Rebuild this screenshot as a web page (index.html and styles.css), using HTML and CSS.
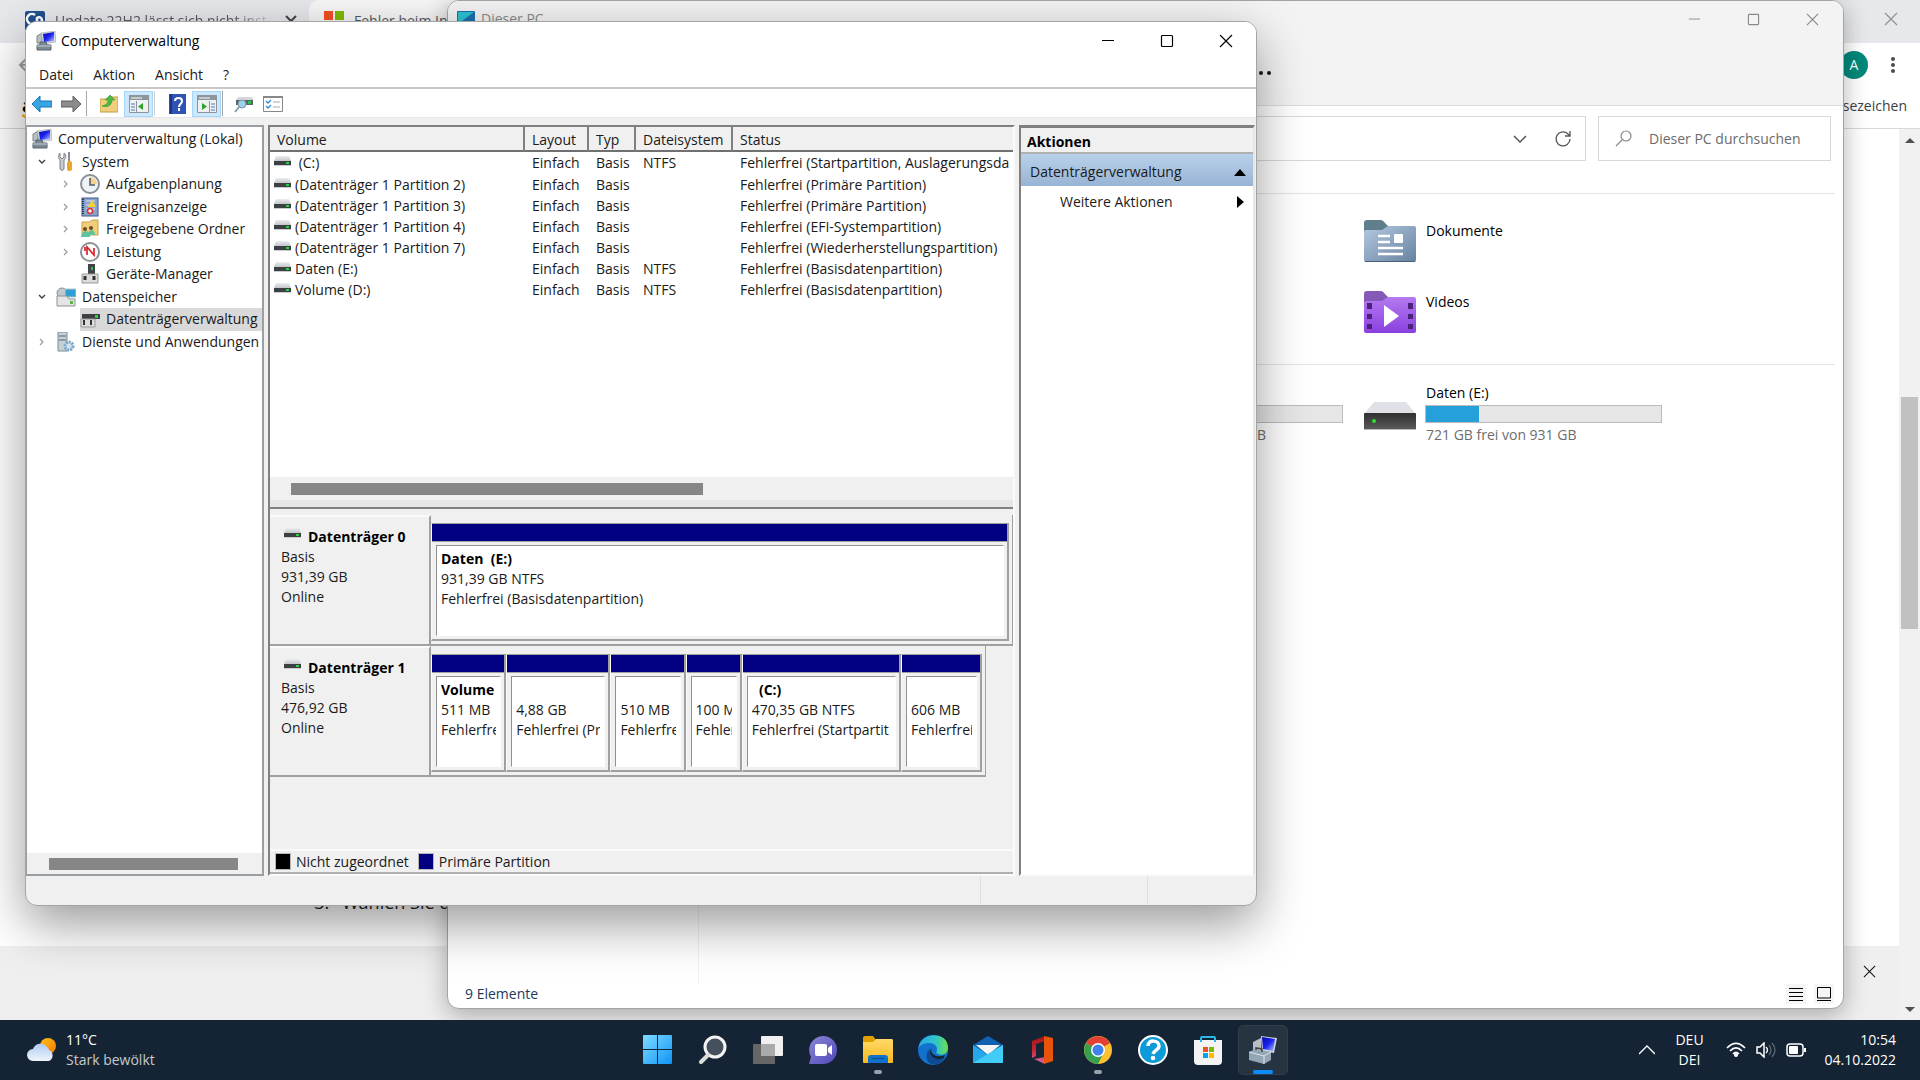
FILE: index.html
```html
<!DOCTYPE html>
<html lang="de">
<head>
  <meta charset="UTF-8">
  <title>Computerverwaltung</title>
  <link rel="stylesheet" href="styles.css">
</head>
<body>
  <!-- shared icons -->
  <svg class="defs" width="0" height="0">
    <defs>
      <linearGradient id="gDoc" x1="0" y1="0" x2="1" y2="1"><stop offset="0" stop-color="#b4c8e0"/><stop offset="1" stop-color="#66829f"/></linearGradient>
      <linearGradient id="gVid" x1="0" y1="0" x2="0" y2="1"><stop offset="0" stop-color="#b57af0"/><stop offset="1" stop-color="#8a40e0"/></linearGradient>
      <linearGradient id="gDark" x1="0" y1="0" x2="0" y2="1"><stop offset="0" stop-color="#303030"/><stop offset="1" stop-color="#5c5c5c"/></linearGradient>
      <linearGradient id="gWin" x1="0" y1="0" x2="1" y2="1"><stop offset="0" stop-color="#7fdcff"/><stop offset="1" stop-color="#0f94f5"/></linearGradient>
      <linearGradient id="gSun" x1="0" y1="0" x2="1" y2="1"><stop offset="0" stop-color="#ffc21a"/><stop offset="1" stop-color="#f07a00"/></linearGradient>
      <linearGradient id="gCloud" x1="0" y1="0" x2="0" y2="1"><stop offset="0" stop-color="#aecbf5"/><stop offset="1" stop-color="#f0f4fb"/></linearGradient>
      <linearGradient id="gChat" x1="0" y1="0" x2="1" y2="1"><stop offset="0" stop-color="#8b86d8"/><stop offset="1" stop-color="#5048b8"/></linearGradient>
      <linearGradient id="gFold" x1="0" y1="0" x2="0" y2="1"><stop offset="0" stop-color="#ffd968"/><stop offset="1" stop-color="#fcb91d"/></linearGradient>
      <linearGradient id="gEdge" x1="0" y1="0" x2="1" y2="0"><stop offset="0" stop-color="#2aa8e8"/><stop offset="0.6" stop-color="#2fc6c8"/><stop offset="1" stop-color="#6be04a"/></linearGradient>
      <linearGradient id="gOff" x1="0" y1="1" x2="0" y2="0"><stop offset="0" stop-color="#d86ab0"/><stop offset="0.5" stop-color="#c8242f"/><stop offset="1" stop-color="#a01818"/></linearGradient>
      <linearGradient id="gScreen" x1="0" y1="0" x2="1" y2="1"><stop offset="0" stop-color="#0808a8"/><stop offset="0.5" stop-color="#1a22f0"/><stop offset="1" stop-color="#b8c8ff"/></linearGradient>
      <linearGradient id="gTop" x1="0" y1="0" x2="0" y2="1"><stop offset="0" stop-color="#eceef0"/><stop offset="1" stop-color="#c2c5c9"/></linearGradient>

      <symbol id="disk" viewBox="0 0 17 11">
        <path d="M2 0h13l2 5H0z" fill="url(#gTop)"/>
        <rect y="5" width="17" height="4" fill="#3c4043"/>
        <rect y="9" width="17" height="1" fill="#c9ccd0"/>
        <rect x="12" y="6" width="3" height="2" fill="#29d243"/>
      </symbol>
      <symbol id="pc" viewBox="0 0 20 20">
        <path d="M1 5l5-3v10H1z" fill="#b9bec4" stroke="#7f868c"/>
        <path d="M5 2l14-2 1 11-13 2z" fill="#d7dbe0" stroke="#8f969c" stroke-width=".5"/>
        <path d="M7 3l11-2v9L8 11z" fill="url(#gScreen)"/>
        <path d="M4 11h6l1 3h4v5H1v-5h3z" fill="#7b8a94" stroke="#56636c"/>
        <path d="M1 15h14" stroke="#c9d2d8"/>
      </symbol>
      <symbol id="chevDown" viewBox="0 0 10 10"><path d="M2 3l3 3 3-3" fill="none" stroke="#404040" stroke-width="1.4"/></symbol>
      <symbol id="chevRight" viewBox="0 0 10 10"><path d="M3 2l3 3-3 3" fill="none" stroke="#9a9a9a" stroke-width="1.2"/></symbol>
      <symbol id="min" viewBox="0 0 14 14"><path d="M1 6.500h12" fill="none" stroke="currentColor"/></symbol>
      <symbol id="max" viewBox="0 0 14 14"><rect x="1.500" y="1.500" width="11" height="11" rx="1" fill="none" stroke="currentColor" stroke-width="1.200"/></symbol>
      <symbol id="close" viewBox="0 0 14 14"><path d="M1 1l12 12M13 1L1 13" fill="none" stroke="currentColor" stroke-width="1.200"/></symbol>
      <symbol id="harddrive" viewBox="0 0 52 28">
        <path d="M10 0h32l10 12H0z" fill="#dfe1e6"/>
        <rect y="11" width="52" height="17" rx="1" fill="url(#gDark)"/>
        <path d="M0 27.500h52" stroke="#b9b9b9"/>
        <circle cx="10" cy="19" r="2" fill="#2ee02e"/>
      </symbol>
    </defs>
  </svg>

  <main class="desktop">
    <!-- browser in the background -->
    <section class="browser">
      <div class="tabs">
        <div class="tab">
          <svg width="20" height="20" viewBox="0 0 20 20"><rect width="20" height="20" rx="2" fill="#20508f"/><path d="M10 4a5 5 0 1 0 0 8M12 14V7a3 3 0 0 1 5 2c0 2-2 3-4 3" fill="none" stroke="#fff" stroke-width="2.500"/></svg>
          <span class="tab-name fade">Update 22H2 lässt sich nicht inst</span>
          <button class="plain" aria-label="Tabs"><svg width="12" height="12" viewBox="0 0 12 12"><path d="M1 3l5 5 5-5" fill="none" stroke="#444" stroke-width="2"/></svg></button>
        </div>
        <div class="tab active">
          <svg width="20" height="20" viewBox="0 0 20 20"><path d="M0 0h9v9H0z" fill="#f25022"/><path d="M11 0h9v9h-9z" fill="#7fba00"/><path d="M0 11h9v9H0z" fill="#00a4ef"/><path d="M11 11h9v9h-9z" fill="#ffb900"/></svg>
          <span class="tab-name">Fehler beim In</span>
        </div>
        <button class="plain tabs-close" aria-label="Schließen"><svg width="14" height="14"><use href="#close"/></svg></button>
      </div>
      <div class="browser-bar">
        <svg width="16" height="16" viewBox="0 0 16 16"><path d="M9 1L2 8l7 7M2 8h13" fill="none" stroke="#a0a0a0" stroke-width="2"/></svg>
        <span class="avatar">A</span>
        <button class="plain" aria-label="Menü"><svg width="6" height="18" viewBox="0 0 6 18"><g fill="#4a4d51"><circle cx="3" cy="3" r="2"/><circle cx="3" cy="9" r="2"/><circle cx="3" cy="15" r="2"/></g></svg></button>
      </div>
      <div class="bookmarks">
        <span class="amazon">a<svg width="16" height="5" viewBox="0 0 16 5"><path d="M0 1q8 6 15 0" fill="none" stroke="#f90" stroke-width="2"/></svg></span>
        <a href="#">Lesezeichen</a>
      </div>
      <div class="page">
        <div class="page-main">
          <ol start="3"><li>Wählen Sie d</li></ol>
          <div class="page-foot">
            <button class="plain" aria-label="Schließen"><svg width="13" height="13"><use href="#close"/></svg></button>
          </div>
        </div>
        <div class="vscroll"><span class="arrow-up"></span><span class="vthumb"></span><span class="arrow-down"></span></div>
      </div>
    </section>

    <!-- explorer -->
    <section class="window explorer">
      <header class="ex-head">
        <div class="ex-title">
          <svg width="18" height="16" viewBox="0 0 18 16"><rect width="18" height="14" rx="1" fill="#1a6fb0"/><path d="M1 1h16L1 13z" fill="#2ec0d0"/></svg>
          <span>Dieser PC</span>
          <div class="win-buttons">
            <button aria-label="Minimieren"><svg width="13" height="13"><use href="#min"/></svg></button>
            <button aria-label="Maximieren"><svg width="13" height="13"><use href="#max"/></svg></button>
            <button aria-label="Schließen"><svg width="13" height="13"><use href="#close"/></svg></button>
          </div>
        </div>
        <button class="plain more" aria-label="Mehr"><svg width="22" height="6" viewBox="0 0 22 6"><g fill="#1a1a1a"><circle cx="3" cy="3" r="2"/><circle cx="11" cy="3" r="2"/><circle cx="19" cy="3" r="2"/></g></svg></button>
      </header>
      <div class="ex-address">
        <div class="address">
          <button class="plain" aria-label="Verlauf"><svg width="16" height="16" viewBox="0 0 16 16"><path d="M2 5l6 6 6-6" fill="none" stroke="#555" stroke-width="1.500"/></svg></button>
          <button class="plain" aria-label="Aktualisieren"><svg width="18" height="18" viewBox="0 0 18 18"><path d="M16 9a7 7 0 1 1-2-5l2 2M16 1v5h-5" fill="none" stroke="#555" stroke-width="1.300"/></svg></button>
        </div>
        <label class="search">
          <svg width="17" height="17" viewBox="0 0 17 17"><circle cx="11" cy="6" r="5" fill="none" stroke="#8a8a8a" stroke-width="1.200"/><path d="M7 10l-6 6" stroke="#8a8a8a" stroke-width="1.200"/></svg>
          <input type="text" placeholder="Dieser PC durchsuchen" aria-label="Dieser PC durchsuchen">
        </label>
      </div>
      <div class="ex-body">
        <div class="ex-nav"></div>
        <div class="ex-content">
          <div class="ex-group folders">
            <div class="ex-item third">
              <svg width="52" height="43" viewBox="0 0 52 43">
                <path d="M0 12V3q0-3 3-3h14q2 0 4 3l3 3v6z" fill="#5f7f8c"/>
                <path d="M2 10h16l6-4h26q2 0 2 2v32q0 2-2 2H2q-2 0-2-2V12q0-2 2-2z" fill="url(#gDoc)"/>
                <path d="M1 41.500h50" stroke="#48607c"/>
                <path d="M14 16h12M14 22h12M14 28h25M14 34h25" stroke="#fff" stroke-width="2.500"/><rect x="30" y="14" width="9" height="9" rx="1" fill="#fff"/>
              </svg>
              <span>Dokumente</span>
            </div>
            <div class="ex-item third">
              <svg width="52" height="43" viewBox="0 0 52 43">
                <path d="M0 12V3q0-3 3-3h14q2 0 4 3l3 3v6z" fill="#8459b8"/>
                <path d="M2 10h16l6-4h26q2 0 2 2v32q0 2-2 2H2q-2 0-2-2V12q0-2 2-2z" fill="url(#gVid)"/>
                <path d="M3 12h5v6H3zM3 23h5v5H3zM3 33h5v5H3zM44 12h5v6h-5zM44 23h5v5h-5zM44 33h5v5h-5z" fill="#4a2478"/>
                <path d="M20 14l15 11-15 11z" fill="#fff"/>
              </svg>
              <span>Videos</span>
            </div>
          </div>
          <div class="ex-group drives">
            <div class="drive second">
              <svg width="52" height="28"><use href="#harddrive"/></svg>
              <div class="drive-info"><span>&nbsp;</span><div class="usage"></div><small class="cut">B</small></div>
            </div>
            <div class="drive">
              <svg width="52" height="28"><use href="#harddrive"/></svg>
              <div class="drive-info"><span>Daten (E:)</span><div class="usage"><div class="used" style="width: 22.500%"></div></div><small>721 GB frei von 931 GB</small></div>
            </div>
          </div>
        </div>
      </div>
      <footer class="ex-status">
        <span>9 Elemente</span>
        <button aria-label="Details"><svg width="14" height="14" viewBox="0 0 14 14"><path d="M0 1.500h14M0 5.500h14M0 9.500h14M0 13.500h14" stroke="#000"/></svg></button>
        <button aria-label="Kacheln"><svg width="14" height="14" viewBox="0 0 14 14"><path d="M.5.500h13v10.500H.5zM0 13.500h14" fill="none" stroke="#000"/></svg></button>
      </footer>
    </section>

    <!-- computer management -->
    <section class="window mmc">
      <header class="mmc-title">
        <svg width="20" height="20"><use href="#pc"/></svg>
        <span>Computerverwaltung</span>
        <div class="win-buttons">
          <button aria-label="Minimieren"><svg width="14" height="14"><use href="#min"/></svg></button>
          <button aria-label="Maximieren"><svg width="14" height="14"><use href="#max"/></svg></button>
          <button aria-label="Schließen"><svg width="14" height="14"><use href="#close"/></svg></button>
        </div>
      </header>
      <nav class="menu">
        <button>Datei</button><button>Aktion</button><button>Ansicht</button><button>?</button>
      </nav>
      <div class="toolbar">
        <button aria-label="Zurück"><svg width="20" height="18" viewBox="0 0 20 18"><path d="M0 9l8-8v5h12v6H8v5z" fill="#38a5e4" stroke="#1b72b0"/></svg></button>
        <button aria-label="Vorwärts"><svg width="20" height="18" viewBox="0 0 20 18"><path d="M20 9l-8-8v5H0v6h12v5z" fill="#8b8b8b" stroke="#606060"/></svg></button>
        <i class="sep"></i>
        <button aria-label="Aufwärts" class="gap-left"><svg width="18" height="19" viewBox="0 0 18 19"><path d="M0 5h7l2-2h9v15H0z" fill="#efcf7c" stroke="#c49d45"/><path d="M2 12c5-1 6-4 6-6H5l5-5 5 5h-3c0 5-4 8-10 6z" fill="#4cb944" stroke="#2f8a2b" stroke-width=".5"/></svg></button>
        <button aria-label="Struktur" class="on"><svg width="20" height="18" viewBox="0 0 20 18"><path d="M.5.500h19v17H.5z" fill="#eef0f2" stroke="#8d959c"/><path d="M0 0h20v5H0z" fill="#8d959c"/><path d="M2 3h11" stroke="#fff"/><path d="M2 9h4M2 12h4M2 15h4" stroke="#4e78b8"/><path d="M7.500 6v12" stroke="#8d959c"/><path d="M14 8v7l-5-3.500z" fill="#2ea32b"/></svg></button>
        <i class="sep light"></i>
        <button aria-label="Hilfe" class="gap-left"><svg width="17" height="20" viewBox="0 0 17 20"><rect width="17" height="20" fill="#2f52b5"/><path d="M2 0v20" stroke="#1c3380" stroke-width="2"/><path d="M6 7c0-4 7-4 7 0 0 3-3 3-3 6" fill="none" stroke="#fff" stroke-width="2"/><rect x="9" y="14" width="2" height="3" fill="#fff"/></svg></button>
        <button aria-label="Aktionsbereich" class="on"><svg width="20" height="18" viewBox="0 0 20 18"><path d="M.5.500h19v17H.5z" fill="#eef0f2" stroke="#8d959c"/><path d="M0 0h20v5H0z" fill="#8d959c"/><path d="M2 3h11" stroke="#fff"/><path d="M14 9h4M14 12h4M14 15h4" stroke="#4e78b8"/><path d="M12.500 6v12" stroke="#8d959c"/><path d="M5 8v7l5-3.500z" fill="#2ea32b"/></svg></button>
        <i class="sep"></i>
        <button aria-label="Suchen" class="gap-small"><svg width="20" height="18" viewBox="0 0 20 18"><path d="M4 2h14l2 3H2z" fill="#d5d7da"/><path d="M2 5h17v5H2z" fill="#5a6468"/><rect x="14" y="6" width="3" height="3" fill="#29c243"/><circle cx="8" cy="9" r="4" fill="#9fd0ea" stroke="#7b97a8"/><path d="M5 12l-4 5" stroke="#8aa0ae" stroke-width="2"/></svg></button>
        <button aria-label="Eigenschaften"><svg width="20" height="16" viewBox="0 0 20 16"><path d="M.5.500h19v15H.5z" fill="#fff" stroke="#888"/><path d="M0 1h20" stroke="#888" stroke-width="2"/><path d="M3 5l2 2 3-3M3 10l2 2 3-3" fill="none" stroke="#2a8ad8" stroke-width="1.300"/><path d="M10 6h7M10 11h7" stroke="#aaa"/></svg></button>
      </div>

      <div class="panes">
        <div class="tree-pane">
          <ul class="tree">
            <li><svg width="20" height="20"><use href="#pc"/></svg><span>Computerverwaltung (Lokal)</span></li>
            <li class="l1"><svg class="chev" width="10" height="10"><use href="#chevDown"/></svg><svg width="20" height="20" viewBox="0 0 20 20"><path d="M4 1v4l2 2 2-2V1c3 2 2 5 0 7v9q-2 3-4 0V8C2 6 2 3 4 1z" fill="#c9ccd0" stroke="#7d8287"/><path d="M13 0v9" stroke="#8b8f93" stroke-width="2"/><rect x="11" y="9" width="5" height="10" rx="2" fill="#eda52a"/></svg><span>System</span></li>
            <li class="l2"><svg class="chev" width="10" height="10"><use href="#chevRight"/></svg><svg width="20" height="20" viewBox="0 0 20 20"><circle cx="10" cy="10" r="9" fill="#eef3f8" stroke="#8b9095" stroke-width="2"/><path d="M10 3a7 7 0 0 1 7 7h-7z" fill="#f3d394"/><path d="M10 4v7h5" fill="none" stroke="#4d5a66" stroke-width="1.500"/></svg><span>Aufgabenplanung</span></li>
            <li class="l2"><svg class="chev" width="10" height="10"><use href="#chevRight"/></svg><svg width="20" height="20" viewBox="0 0 20 20"><rect x="2" y="1" width="16" height="18" fill="#8aa3cc" stroke="#41598c"/><path d="M6 4h9M6 8h9M6 12h9" stroke="#dfe6f3"/><path d="M3 2v16" stroke="#26355c" stroke-width="2" stroke-dasharray="1 1"/><path d="M12 3l4 7H8z" fill="#fbd22d"/><circle cx="10" cy="14" r="2.500" fill="#fff" stroke="#d8322c" stroke-width="1.500"/></svg><span>Ereignisanzeige</span></li>
            <li class="l2"><svg class="chev" width="10" height="10"><use href="#chevRight"/></svg><svg width="20" height="20" viewBox="0 0 20 20"><path d="M2 3h8l2-2h6v15H2z" fill="#f0cf78" stroke="#c9a24a"/><circle cx="5" cy="10" r="2" fill="#6b4a2c"/><circle cx="11" cy="9" r="2" fill="#6b4a2c"/><path d="M1 18q1-6 5-6t4 6zM8 16q0-4 3-5 4 0 4 5z" fill="#5fc3a0"/></svg><span>Freigegebene Ordner</span></li>
            <li class="l2"><svg class="chev" width="10" height="10"><use href="#chevRight"/></svg><svg width="20" height="20" viewBox="0 0 20 20"><circle cx="10" cy="10" r="9" fill="#fff" stroke="#8b9095" stroke-width="2"/><path d="M5 5v4M7 13V5l7 8V6" fill="none" stroke="#d8222a" stroke-width="1.700"/></svg><span>Leistung</span></li>
            <li class="l2"><i class="chev"></i><svg width="20" height="20" viewBox="0 0 20 20"><rect x="8" y="0" width="7" height="10" fill="#3f4448"/><rect x="11" y="3" width="2" height="3" fill="#2cc24a"/><path d="M2 10h16v9H2z" fill="#dcdcdc" stroke="#999"/><path d="M5 12v4M14 12v4" stroke="#333" stroke-width="3"/></svg><span>Geräte-Manager</span></li>
            <li class="l1"><svg class="chev" width="10" height="10"><use href="#chevDown"/></svg><svg width="20" height="20" viewBox="0 0 20 20"><circle cx="6" cy="6" r="5" fill="#c4c9cd" stroke="#8c9195"/><rect x="9" y="2" width="11" height="8" fill="#2d9fd2" stroke="#b5c5cf"/><path d="M1 9h10l2 3h6v7H1z" fill="#e2e4e6" stroke="#8c9195"/><rect x="14" y="14" width="3" height="3" fill="#58b54a"/></svg><span>Datenspeicher</span></li>
            <li class="l2"><i class="chev"></i><a href="#" class="selected"><svg width="20" height="20" viewBox="0 0 20 20"><path d="M4 2h14l2 3H2z" fill="#d5d7da"/><rect x="2" y="5" width="18" height="5" fill="#3c4043"/><rect x="15" y="6" width="3" height="3" fill="#29d243"/><path d="M1 10h14v8H1z" fill="#dcdcdc" stroke="#999"/><path d="M4 11v5M11 11v5" stroke="#333" stroke-width="2"/></svg><span>Datenträgerverwaltung</span></a></li>
            <li class="l1"><svg class="chev" width="10" height="10"><use href="#chevRight"/></svg><svg width="20" height="20" viewBox="0 0 20 20"><path d="M2 0h9v19H2z" fill="#c6d0d6" stroke="#7d8b93"/><path d="M3 4h7M3 8h7" stroke="#56646c"/><circle cx="13" cy="14" r="4" fill="#cfe3f2" stroke="#7aa7c9" stroke-width="3" stroke-dasharray="2 1"/></svg><span>Dienste und Anwendungen</span></li>
          </ul>
          <div class="hscroll"><span class="hthumb"></span></div>
        </div>

        <div class="main-pane">
          <div class="volumes">
            <table>
              <thead><tr><th class="c1">Volume</th><th class="c2">Layout</th><th class="c3">Typ</th><th class="c4">Dateisystem</th><th>Status</th></tr></thead>
              <tbody>
                <tr><td><svg width="17" height="11"><use href="#disk"/></svg>&nbsp;(C:)</td><td>Einfach</td><td>Basis</td><td>NTFS</td><td>Fehlerfrei (Startpartition, Auslagerungsda</td></tr>
                <tr><td><svg width="17" height="11"><use href="#disk"/></svg>(Datenträger 1 Partition 2)</td><td>Einfach</td><td>Basis</td><td></td><td>Fehlerfrei (Primäre Partition)</td></tr>
                <tr><td><svg width="17" height="11"><use href="#disk"/></svg>(Datenträger 1 Partition 3)</td><td>Einfach</td><td>Basis</td><td></td><td>Fehlerfrei (Primäre Partition)</td></tr>
                <tr><td><svg width="17" height="11"><use href="#disk"/></svg>(Datenträger 1 Partition 4)</td><td>Einfach</td><td>Basis</td><td></td><td>Fehlerfrei (EFI-Systempartition)</td></tr>
                <tr><td><svg width="17" height="11"><use href="#disk"/></svg>(Datenträger 1 Partition 7)</td><td>Einfach</td><td>Basis</td><td></td><td>Fehlerfrei (Wiederherstellungspartition)</td></tr>
                <tr><td><svg width="17" height="11"><use href="#disk"/></svg>Daten (E:)</td><td>Einfach</td><td>Basis</td><td>NTFS</td><td>Fehlerfrei (Basisdatenpartition)</td></tr>
                <tr><td><svg width="17" height="11"><use href="#disk"/></svg>Volume (D:)</td><td>Einfach</td><td>Basis</td><td>NTFS</td><td>Fehlerfrei (Basisdatenpartition)</td></tr>
              </tbody>
            </table>
            <div class="hscroll wide"><span class="hthumb"></span></div>
          </div>
          <div class="disks">
            <div class="disk">
              <div class="disk-label"><b><svg width="17" height="11"><use href="#disk"/></svg>Datenträger 0</b><span>Basis</span><span>931,39 GB</span><span>Online</span></div>
              <div class="parts" style="flex-grow: 582">
                <div class="part" style="flex-grow: 1"><div class="part-body"><b>Daten&nbsp; (E:)</b><span>931,39 GB NTFS</span><span>Fehlerfrei (Basisdatenpartition)</span></div></div>
              </div>
            </div>
            <div class="disk">
              <div class="disk-label"><b><svg width="17" height="11"><use href="#disk"/></svg>Datenträger 1</b><span>Basis</span><span>476,92 GB</span><span>Online</span></div>
              <div class="parts" style="flex-grow: 555">
                <div class="part" style="flex-grow: 65"><div class="part-body"><b>Volume</b><span>511 MB</span><span>Fehlerfrei</span></div></div>
                <div class="part" style="flex-grow: 94"><div class="part-body"><b>&nbsp;</b><span>4,88 GB</span><span>Fehlerfrei (Pri</span></div></div>
                <div class="part" style="flex-grow: 65"><div class="part-body"><b>&nbsp;</b><span>510 MB</span><span>Fehlerfrei</span></div></div>
                <div class="part" style="flex-grow: 46"><div class="part-body"><b>&nbsp;</b><span>100 MB</span><span>Fehlerf</span></div></div>
                <div class="part" style="flex-grow: 149"><div class="part-body"><b>&nbsp; (C:)</b><span>470,35 GB NTFS</span><span>Fehlerfrei (Startpartit</span></div></div>
                <div class="part" style="flex-grow: 71"><div class="part-body"><b>&nbsp;</b><span>606 MB</span><span>Fehlerfrei</span></div></div>
              </div>
              <div style="flex-grow: 27"></div>
            </div>
          </div>
          <div class="legend"><i class="swatch black"></i>Nicht zugeordnet<i class="swatch blue"></i>Primäre Partition</div>
        </div>

        <aside class="actions">
          <h2>Aktionen</h2>
          <button class="action-head">Datenträgerverwaltung<svg width="12" height="7" viewBox="0 0 12 7"><path d="M0 7l6-7 6 7z"/></svg></button>
          <button class="action">Weitere Aktionen<svg width="7" height="12" viewBox="0 0 7 12"><path d="M0 0l7 6-7 6z"/></svg></button>
        </aside>
      </div>
      <footer class="mmc-status"><span></span><span></span><span></span></footer>
    </section>
  </main>

  <footer class="taskbar">
    <div class="weather">
      <svg width="30" height="24" viewBox="0 0 30 24"><circle cx="21" cy="8" r="8" fill="url(#gSun)"/><path d="M6 23a6 6 0 0 1 0-12 8 8 0 0 1 14-2q2 2 2 3a6 6 0 0 1 0 11z" fill="url(#gCloud)"/></svg>
      <div><span>11°C</span><span class="dim">Stark bewölkt</span></div>
    </div>
    <div class="apps">
      <button aria-label="Start"><svg width="30" height="30" viewBox="0 0 30 30"><path d="M0 1q0-1 1-1h13v14H0zM15 0h13q1 0 1 1v13H15zM0 15h14v14H1q-1 0-1-1zM15 15h14v13q0 1-1 1H15z" fill="url(#gWin)"/></svg></button>
      <button aria-label="Suche"><svg width="30" height="30" viewBox="0 0 30 30"><circle cx="17" cy="12" r="10" fill="#44505c" stroke="#f4f4f4" stroke-width="3"/><path d="M10 20l-7 7" stroke="#dcdcdc" stroke-width="4" stroke-linecap="round"/></svg></button>
      <button aria-label="Taskansicht"><svg width="30" height="30" viewBox="0 0 30 30"><rect x="8" y="1" width="22" height="20" rx="1" fill="#f0f0f0"/><rect y="9" width="22" height="20" rx="1" fill="#666"/><rect x="8" y="9" width="14" height="12" fill="#aaa"/></svg></button>
      <button aria-label="Chat"><svg width="30" height="30" viewBox="0 0 30 30"><path d="M15 1a14 14 0 1 1 0 28H1l2-7A14 14 0 0 1 15 1z" fill="url(#gChat)"/><rect x="7" y="9" width="12" height="12" rx="2" fill="#fff"/><path d="M20 13l4-3v10l-4-3z" fill="#fff"/></svg></button>
      <button aria-label="Explorer" class="open"><svg width="30" height="30" viewBox="0 0 30 30"><path d="M0 3q0-2 2-2h8l3 4v4H0z" fill="#e0a000"/><path d="M0 7h10l3-3h16q1 0 1 2v21q0 1-1 1H1q-1 0-1-1z" fill="url(#gFold)"/><path d="M5 28v-5q0-3 3-3h14q3 0 3 3v5z" fill="#0f72c8"/><path d="M9 23.500h12" stroke="#0a4c8c"/></svg></button>
      <button aria-label="Edge"><svg width="30" height="30" viewBox="0 0 30 30"><circle cx="15" cy="15" r="15" fill="#1273cf"/><path d="M1 11C4-3 30-4 30 13c0 6-6 8-10 6-3-1-1-2-1-5 0-4-4-6-8-6-5 0-9 2-11 6z" fill="url(#gEdge)"/><path d="M13 13c-4 5 1 12 8 11l6-1q-6 8-14 6C7 26 7 17 13 13z" fill="#0c4a92"/><path d="M14 12c-3 5 2 12 13 8l-1 3c-6 3-15 0-14-7z" fill="#152536"/></svg></button>
      <button aria-label="Mail"><svg width="30" height="30" viewBox="0 0 30 30"><path d="M0 10L15 1l15 9v8H0z" fill="#1062b0"/><path d="M3 10h24L15 20z" fill="#f5f5f5"/><path d="M0 10l15 10L30 10v17q0 1-1 1H1q-1 0-1-1z" fill="#24a8ea"/><path d="M30 10L0 28h29q1 0 1-1z" fill="#42ccf8"/></svg></button>
      <button aria-label="Office"><svg width="30" height="30" viewBox="0 0 30 30"><path d="M17 1L4 6v17l4-2V9l9-3zM6 24l11-2v7z" fill="url(#gOff)"/><path d="M16 1l9 2v23l-9 3V1z" fill="#e8540a"/></svg></button>
      <button aria-label="Chrome" class="open"><svg width="30" height="30" viewBox="0 0 30 30"><circle cx="15" cy="15" r="14" fill="#fbc02d"/><path d="M15 15L3 8a14 14 0 0 1 24 0z" fill="#e34033"/><path d="M15 15L3 8a14 14 0 0 0 12 21l6-12z" fill="#34a050"/><circle cx="15" cy="15" r="7" fill="#fff"/><circle cx="15" cy="15" r="5.500" fill="#3f82ee"/></svg></button>
      <button aria-label="Hilfe"><svg width="30" height="30" viewBox="0 0 30 30"><circle cx="15" cy="15" r="14" fill="#0c9ad8" stroke="#fff" stroke-width="2"/><path d="M10 11c0-7 11-6 11 0 0 4-5 4-6 8" fill="none" stroke="#fff" stroke-width="3.500"/><circle cx="15" cy="23" r="2.300" fill="#fff"/></svg></button>
      <button aria-label="Store"><svg width="30" height="30" viewBox="0 0 30 30"><path d="M8 7V3q0-1 1-1h12q1 0 1 1v4" fill="none" stroke="#29b6ea" stroke-width="2"/><path d="M1 5h28v21q0 4-4 4H5q-4 0-4-4z" fill="#f3f3f3"/><path d="M8 5v2M22 5v2" stroke="#29b6ea" stroke-width="2"/><path d="M10 12h5v5h-5z" fill="#f25022"/><path d="M16 12h5v5h-5z" fill="#7fba00"/><path d="M10 18h5v5h-5z" fill="#00a4ef"/><path d="M16 18h5v5h-5z" fill="#ffb900"/></svg></button>
      <button aria-label="Computerverwaltung" class="open current"><svg width="30" height="30" viewBox="0 0 30 30"><path d="M5 7l8-4v14H5z" fill="#b9bec4"/><path d="M13 1l16 2-3 15-12-2z" fill="#cfd3da"/><path d="M14 2l13 2-2 12-10-2z" fill="url(#gScreen)"/><path d="M1 17l6-3 16 3v8l-7 4-15-4z" fill="#93a6b4"/><path d="M1 17l15 4 7-4M16 21v8" fill="none" stroke="#dce5eb"/><path d="M8 15v-2l6 1v3" fill="none" stroke="#444" stroke-width="1.500"/></svg></button>
    </div>
    <div class="tray">
      <button aria-label="Ausgeblendete Symbole"><svg width="16" height="10" viewBox="0 0 16 10"><path d="M0 9l8-8 8 8" fill="none" stroke="#fff" stroke-width="1.300"/></svg></button>
      <div class="lang"><span>DEU</span><span>DEI</span></div>
      <div class="status-icons">
        <svg width="20" height="16" viewBox="0 0 20 16"><path d="M1 6q9-9 18 0M4 9q6-6 12 0M7 12q3-3 6 0" fill="none" stroke="#fff" stroke-width="1.700"/><circle cx="10" cy="13" r="2" fill="#fff"/></svg>
        <svg width="20" height="16" viewBox="0 0 20 16"><path d="M1 5h3l4-4v14l-4-4H1z" fill="none" stroke="#fff" stroke-width="1.500"/><path d="M10 5q3 3 0 6" fill="none" stroke="#fff" stroke-width="1.300"/><path d="M13 3q4 5 0 10M16 1q6 7 0 14" fill="none" stroke="#5c6670" stroke-width="1.300"/></svg>
        <svg width="20" height="16" viewBox="0 0 20 16"><rect x="1" y="2" width="16" height="12" rx="3" fill="none" stroke="#fff" stroke-width="1.500"/><rect x="3" y="4" width="9" height="8" rx="1" fill="#fff"/><path d="M19 6v4" stroke="#fff" stroke-width="2"/></svg>
      </div>
      <div class="clock"><span>10:54</span><span>04.10.2022</span></div>
    </div>
  </footer>
</body>
</html>
```
FILE: styles.css
```css
* {
  box-sizing: border-box;
}
body {
  margin: 0;
  height: 100vh;
  display: flex;
  flex-direction: column;
  overflow: hidden;
  font-family: "Open Sans", "Noto Sans", sans-serif;
  font-size: 14px;
  line-height: 20px;
  color: #1a1a1a;
}
button, input {
  font: inherit;
  color: inherit;
  background: none;
  border: none;
  padding: 0;
}
svg {
  flex: none;
}
a {
  color: inherit;
  text-decoration: none;
}
.plain {
  display: flex;
}
.defs {
  position: absolute;
}
.desktop {
  flex: 1;
  position: relative;
  overflow: hidden;
}

/* browser */
.browser {
  height: 100%;
  display: flex;
  flex-direction: column;
  background: #fff;
}
.tabs {
  height: 43px;
  display: flex;
  background: #e7e8ec;
  color: #55585c;
}
.tab {
  display: flex;
  align-items: flex-start;
  gap: 10px;
  padding: 11px 12px 0 15px;
}
.tab:first-child {
  padding-left: 25px;
  width: 309px;
}
.tab .plain {
  margin-top: 2px;
}
.tab.active {
  background: #f7f7f7;
  border-radius: 10px 10px 0 0;
  width: 300px;
}
.tab-name {
  flex: 1;
  white-space: nowrap;
  overflow: hidden;
}
.fade {
  -webkit-mask-image: linear-gradient(90deg, #000 80%, transparent);
  mask-image: linear-gradient(90deg, #000 80%, transparent);
}
.tabs-close {
  margin: 12px 22px 0 auto;
  color: #909090;
}
.browser-bar {
  height: 44px;
  display: flex;
  align-items: center;
  padding: 0 24px 0 18px;
}
.avatar {
  margin-left: auto;
  margin-right: 22px;
  width: 28px;
  line-height: 28px;
  border-radius: 50%;
  text-align: center;
  background: #00897b;
  color: #fff;
}
.bookmarks {
  height: 42px;
  display: flex;
  justify-content: space-between;
  padding: 9px 13px 0 22px;
  border-bottom: 1px solid #d8d8d8;
  color: #3c4043;
}
.amazon {
  display: flex;
  flex-direction: column;
  font-weight: bold;
  font-size: 18px;
  line-height: 18px;
  color: #000;
}
.page {
  flex: 1;
  display: flex;
}
.page-main {
  flex: 1;
  display: flex;
  flex-direction: column;
  justify-content: flex-end;
}
.page ol {
  margin: 0 0 30px;
  padding-left: 334px;
  font-size: 18px;
  line-height: 28px;
}
.page li {
  padding-left: 8px;
}
.page-foot {
  height: 74px;
  background: #efefef;
  display: flex;
  justify-content: flex-end;
  align-items: flex-start;
  padding: 19px 23px;
}
.vscroll {
  width: 21px;
  background: #f1f1f1;
  display: flex;
  flex-direction: column;
  align-items: center;
  padding: 9px 0 8px;
}
.arrow-up, .arrow-down {
  border: 5px solid transparent;
  border-top-width: 0;
  border-bottom-color: #505050;
}
.arrow-down {
  margin-top: auto;
  border-width: 5px 5px 0;
  border-color: #505050 transparent transparent;
}
.vthumb {
  margin-top: 254px;
  width: 17px;
  height: 232px;
  background: #c1c1c1;
}

/* windows */
.window {
  position: absolute;
  display: flex;
  flex-direction: column;
  overflow: hidden;
  border: 1px solid #a4a4a4;
  border-radius: 12px;
  background: #fff;
  box-shadow: 0 18px 50px rgba(0, 0, 0, 0.4);
}
.win-buttons {
  margin-left: auto;
  display: flex;
  padding-right: 1px;
}
.win-buttons button {
  width: 59px;
  display: flex;
  justify-content: center;
}

/* explorer */
.explorer {
  inset: 0 76px 11px 447px;
  box-shadow: 0 6px 24px rgba(0, 0, 0, 0.3);
}
.ex-head {
  height: 105px;
  background: #f3f3f3;
  border-bottom: 1px solid #dcdcdc;
}
.ex-title {
  height: 36px;
  display: flex;
  align-items: center;
  gap: 6px;
  padding-left: 9px;
  color: #888;
}
.more {
  margin: 33px 0 0 802px;
}
.ex-address {
  display: flex;
  gap: 12px;
  padding: 10px 12px 0;
}
.address {
  flex: 1;
  height: 45px;
  border: 1px solid #d9d9d9;
  display: flex;
  align-items: center;
  justify-content: flex-end;
  gap: 26px;
  padding-right: 13px;
}
.search {
  width: 233px;
  border: 1px solid #d9d9d9;
  display: flex;
  align-items: center;
  gap: 17px;
  padding-left: 16px;
}
.search input {
  flex: 1;
  min-width: 0;
}
.search input::placeholder {
  color: #6b6b6b;
}
.ex-body {
  flex: 1;
  display: flex;
}
.ex-nav {
  width: 251px;
  border-right: 1px solid #f0f0f0;
}
.ex-content {
  flex: 1;
  padding: 32px 8px 0 0;
  color: #000;
}
.ex-group {
  display: grid;
  grid-template-columns: 319px 319px 319px;
  padding-left: 27px;
  border-top: 1px solid #e5e5e5;
}
.folders {
  row-gap: 28px;
  padding-top: 26px;
  padding-bottom: 30px;
}
.ex-item {
  display: flex;
  gap: 10px;
}
.ex-item span {
  padding-top: 1px;
}
.third {
  grid-column: 3;
}
.second {
  grid-column: 2;
}
.drives {
  padding-top: 18px;
}
.drive {
  display: flex;
  gap: 9px;
}
.drive svg {
  margin-top: 19px;
}
.drive-info {
  display: flex;
  flex-direction: column;
  width: 237px;
}
.drive-info span, .drive-info small {
  padding-left: 1px;
}
.usage {
  height: 18px;
  margin: 2px 0;
  background: #e6e6e6;
  border: 1px solid #bcbcbc;
}
.used {
  height: 100%;
  background: #26a0da;
}
.drive-info small {
  font-size: 14px;
  color: #6d6d6d;
}
.cut {
  width: 160px;
  text-align: right;
}
.ex-status {
  display: flex;
  align-items: center;
  gap: 8px;
  padding: 0 9px 4px 17px;
  color: #1e395b;
}
.ex-status span {
  margin-right: auto;
}
.ex-status button {
  background: #f5f5f5;
  width: 20px;
  height: 20px;
  display: flex;
  align-items: center;
  justify-content: center;
}

/* computer management */
.mmc {
  inset: 21px 663px 114px 25px;
  background: #f0f0f0;
}
.mmc-title {
  height: 38px;
  display: flex;
  align-items: center;
  gap: 5px;
  padding-left: 10px;
  background: #fff;
  color: #000;
}
.menu {
  height: 29px;
  display: flex;
  gap: 20px;
  padding-top: 2px;
  padding-left: 13px;
  background: #fff;
  border-bottom: 2px solid #c8c8ca;
}
.toolbar {
  height: 29px;
  display: flex;
  align-items: center;
  gap: 1px;
  padding-top: 1px;
  padding-left: 2px;
  background: #fff;
  border-bottom: 1px solid #e6e6e6;
}
.toolbar button {
  width: 28px;
  height: 26px;
  display: flex;
  align-items: center;
  justify-content: center;
}
.toolbar .gap-left {
  margin-left: 7px;
}
.toolbar .gap-small {
  margin-left: 6px;
}
.toolbar .on {
  width: 29px;
  background: #cce8ff;
  border: 1px solid #a8d6f8;
}
.sep {
  width: 1px;
  height: 25px;
  background: #a5a5a5;
}
.light {
  background: #d0d0d0;
}
.panes {
  flex: 1;
  min-height: 0;
  display: flex;
  gap: 4px;
  padding-top: 7px;
  padding-right: 1px;
}
.tree-pane {
  width: 238px;
  display: flex;
  flex-direction: column;
  justify-content: space-between;
  background: #fff;
  border: 2px solid #9a9fa6;
  border-left-width: 1px;
}
.tree {
  list-style: none;
  margin: 0;
  padding: 1px 0 0;
  height: 226px;
  display: grid;
  grid-auto-rows: 1fr;
  white-space: nowrap;
}
.tree li, .tree a {
  display: flex;
  align-items: center;
  gap: 6px;
}
.tree li {
  padding-left: 5px;
}
.tree .l1 {
  padding-left: 10px;
}
.tree .l2 {
  padding-left: 34px;
}
.chev {
  width: 10px;
  margin-right: 3px;
}
.selected {
  flex: 1;
  height: 100%;
  background: #d9d9d9;
}
.hscroll {
  height: 21px;
  display: flex;
  align-items: center;
  background: #f0f0f0;
  padding-left: 22px;
}
.hthumb {
  width: 189px;
  height: 12px;
  background: #868686;
}
.main-pane {
  flex: 1;
  min-width: 0;
  display: flex;
  flex-direction: column;
  border: 2px solid #808080;
  border-right-color: #fafafa;
  border-bottom-color: #fafafa;
}
.volumes {
  height: 382px;
  display: flex;
  flex-direction: column;
  background: #fff;
  overflow: hidden;
  border-bottom: 2px solid #808080;
}
table {
  width: 100%;
  table-layout: fixed;
  border-collapse: separate;
  border-spacing: 0;
  white-space: nowrap;
}
th {
  height: 25px;
  padding: 3px 0 0 7px;
  text-align: left;
  font-weight: normal;
  background: #f0f0f0;
  border-right: 2px solid #808080;
  border-bottom: 2px solid #707070;
}
th:last-child {
  border-right: none;
}
.c1 {
  width: 255px;
}
.c2 {
  width: 64px;
}
.c3 {
  width: 47px;
}
.c4 {
  width: 97px;
}
td {
  height: 21px;
  padding: 0 0 0 7px;
  overflow: hidden;
}
td:first-child {
  padding-left: 4px;
}
tbody tr:first-child td {
  height: 22px;
}
td svg {
  margin-right: 4px;
  margin-bottom: 1px;
}
.wide {
  height: 30px;
  margin-top: auto;
  padding-left: 21px;
  border-bottom: 7px solid #e6e6e6;
}
.wide .hthumb {
  width: 412px;
}
.disks {
  flex: 1;
  padding-top: 6px;
}
.disk {
  display: flex;
  height: 131px;
}
.disk-label {
  width: 161px;
  display: flex;
  flex-direction: column;
  padding: 10px 0 0 11px;
  border-top: 2px solid #fafafa;
  border-right: 2px solid #a0a0a0;
  border-bottom: 2px solid #a0a0a0;
}
.disk-label b {
  color: #000;
}
.disk-label svg {
  margin: 0 7px 3px 3px;
}
.parts {
  display: flex;
  flex-basis: 0;
  min-width: 0;
  border: 2px solid #a0a0a0;
  border-width: 0 1px 2px 0;
  padding: 8px 3px 3px 0;
}
.part {
  flex-basis: 0;
  min-width: 0;
  border: 2px solid #a0a0a0;
  border-left: 1px solid #fafafa;
  border-top-width: 1px;
  padding: 21px 3px 3px 4px;
  background: linear-gradient(#000080 17px, #a0a0a0 17px, #a0a0a0 18px, #f0f0f0 18px);
}
.part-body {
  height: 100%;
  display: flex;
  flex-direction: column;
  padding: 3px 4px 0;
  background: #fff;
  border: 1px solid #909090;
  border-right-color: #fff;
  border-bottom-color: #fff;
}
.part-body span, .part-body b {
  white-space: nowrap;
  overflow: hidden;
}
.part-body b {
  color: #000;
}
.legend {
  display: flex;
  align-items: center;
  height: 25px;
  padding-left: 5px;
  border-top: 2px solid #fafafa;
  border-bottom: 2px solid #b0b0b0;
}
.swatch {
  width: 16px;
  height: 17px;
  border: 1px solid #b8b8b8;
  margin-right: 5px;
}
.black {
  background: #000;
}
.blue {
  background: #000080;
  margin-left: 9px;
}
.actions {
  width: 236px;
  background: #fff;
  border: 2px solid #808080;
  border-top-width: 3px;
  border-right-color: #e6e6e6;
  border-bottom-color: #fafafa;
}
.actions h2 {
  margin: 0;
  height: 26px;
  padding: 4px 6px 0;
  font-size: 14px;
  background: #f0f0f0;
  border-bottom: 2px solid #b0b0b0;
  color: #000;
}
.action-head, .action {
  width: 100%;
  height: 32px;
  display: flex;
  justify-content: space-between;
  align-items: center;
  padding: 4px 7px 0 9px;
}
.action-head {
  background: linear-gradient(#b9d1ea, #98b4d4);
}
.action {
  padding: 0 9px 1px 39px;
}
.mmc-status {
  height: 29px;
  display: flex;
}
.mmc-status span {
  width: 109px;
  border-left: 1px solid #e0e0e0;
}
.mmc-status span:first-child {
  flex: 1;
  border: none;
}
.mmc-status span:nth-child(2) {
  width: 167px;
}

/* taskbar */
.taskbar {
  height: 60px;
  display: grid;
  grid-template-columns: 1fr auto 1fr;
  align-items: center;
  background: #152434;
  color: #fff;
}
.weather {
  display: flex;
  align-items: center;
  gap: 9px;
  padding-left: 27px;
}
.weather span, .lang span, .clock span {
  display: block;
}
.dim {
  color: #c5c9cd;
}
.apps {
  display: flex;
  gap: 5px;
}
.apps button {
  position: relative;
  width: 50px;
  height: 50px;
  display: flex;
  align-items: center;
  justify-content: center;
  border-radius: 5px;
}
.apps .current {
  background: #263442;
  border: 1px solid #303d4a;
}
.open::after {
  content: "";
  position: absolute;
  bottom: 1px;
  width: 8px;
  height: 4px;
  border-radius: 2px;
  background: #98a0a8;
}
.current::after {
  bottom: 0;
  width: 20px;
  background: #0a8cff;
}
.tray {
  display: flex;
  align-items: center;
  justify-content: flex-end;
  padding-right: 24px;
}
.lang {
  margin: 0 22px 0 20px;
  text-align: center;
}
.status-icons {
  display: flex;
  gap: 10px;
  margin-right: 19px;
}
.clock {
  text-align: right;
}
```
